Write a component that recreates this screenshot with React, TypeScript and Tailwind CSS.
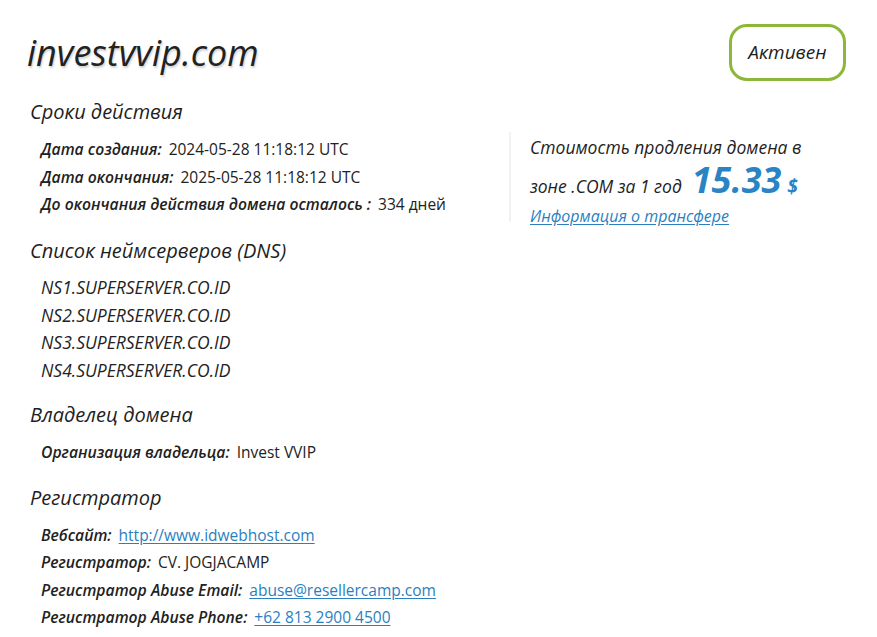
const font = { fontFamily: '"Open Sans", "Noto Sans", sans-serif' };

function Row({ label, children }: { label: string; children: React.ReactNode }) {
  return (
    <div className="leading-[27.5px] text-[15.5px] text-[#222]">
      <span className="italic font-semibold text-[15.7px] mr-[7px]">{label}</span>
      <span>{children}</span>
    </div>
  );
}

function Heading({ children }: { children: React.ReactNode }) {
  return <h2 className="text-[20px] italic leading-[30px] text-[#1e1e1e] pl-[3px]">{children}</h2>;
}

function Link({ children }: { children: React.ReactNode }) {
  return <a href="#" className="text-[#2a7fc0] underline underline-offset-2">{children}</a>;
}

export default function App() {
  const servers = ['NS1.SUPERSERVER.CO.ID', 'NS2.SUPERSERVER.CO.ID', 'NS3.SUPERSERVER.CO.ID', 'NS4.SUPERSERVER.CO.ID'];

  return (
    <div className="min-h-screen bg-white pl-[27px] pr-[31px] pt-[24px]" style={font}>
      <div className="flex items-center justify-between">
        <h1 className="text-[36px] italic font-medium text-[#222] leading-none [text-shadow:1px_2px_2px_rgba(0,0,0,0.18)]">
          investvvip.com
        </h1>
        <div className="w-[117px] h-[57px] rounded-[18px] border-[3px] border-[#8cb83a] flex items-center justify-center text-[19px] italic text-[#1e1e1e]">
          Активен
        </div>
      </div>

      <div className="flex mt-[16px]">
        <div className="w-[482px] shrink-0">
          <Heading>Сроки действия</Heading>
          <div className="mt-[9px] pl-[14px]">
            <Row label="Дата создания:">2024-05-28 11:18:12 UTC</Row>
            <Row label="Дата окончания:">2025-05-28 11:18:12 UTC</Row>
            <Row label="До окончания действия домена осталось :">334 дней</Row>
          </div>
        </div>
        <div className="mt-[35px] h-[90px] border-l-2 border-[#f2f2f2] pl-[19px]">
          <div className="italic text-[17.5px] text-[#1e1e1e] leading-[30px]">Стоимость продления домена в</div>
          <div className="italic text-[17.5px] text-[#1e1e1e] leading-[30px] flex items-baseline">
            зоне .COM за 1 год
            <span className="ml-[10px] text-[36px] font-bold text-[#2a84c4] leading-none">15.33</span>
            <span className="ml-[6px] text-[19px] font-bold text-[#2a84c4]">$</span>
          </div>
          <div className="italic text-[16px] leading-[30px]">
            <Link>Информация о трансфере</Link>
          </div>
        </div>
      </div>

      <div className="mt-[14px]">
        <Heading>Список неймсерверов (DNS)</Heading>
        <div className="mt-[8px] pl-[14px]">
          {servers.map((s) => (
            <div key={s} className="leading-[27.5px] text-[17.5px] italic text-[#222]">{s}</div>
          ))}
        </div>
      </div>

      <div className="mt-[16px]">
        <Heading>Владелец домена</Heading>
        <div className="mt-[9px] pl-[14px]">
          <Row label="Организация владельца:">Invest VVIP</Row>
        </div>
      </div>

      <div className="mt-[16px]">
        <Heading>Регистратор</Heading>
        <div className="mt-[9px] pl-[14px]">
          <Row label="Вебсайт:"><Link>http://www.idwebhost.com</Link></Row>
          <Row label="Регистратор:">CV. JOGJACAMP</Row>
          <Row label="Регистратор Abuse Email:"><Link>abuse@resellercamp.com</Link></Row>
          <Row label="Регистратор Abuse Phone:"><Link>+62 813 2900 4500</Link></Row>
        </div>
      </div>
    </div>
  );
}
